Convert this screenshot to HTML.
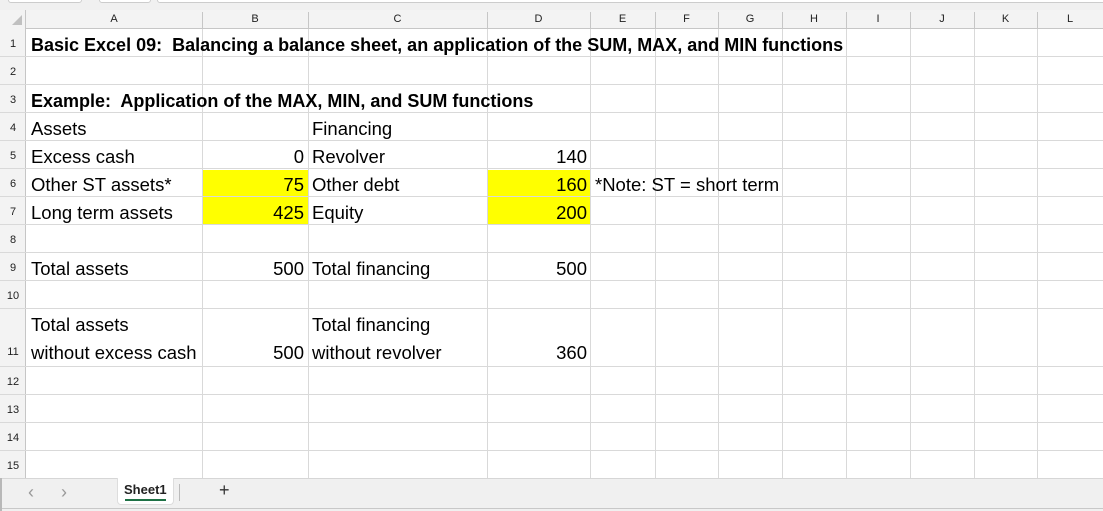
<!DOCTYPE html>
<html><head><style>
*{margin:0;padding:0;box-sizing:border-box}
body{width:1103px;height:511px;overflow:hidden;background:#fff;position:relative;font-family:"Liberation Sans",sans-serif}
.a{position:absolute}
.t{position:absolute;font-size:18.5px;color:#000;white-space:nowrap;line-height:20px}
.r{text-align:right}
.b{font-weight:bold;font-size:18px}
.vl{position:absolute;width:1px;background:#d9d9d9}
.hl{position:absolute;height:1px;background:#d9d9d9}
.ch{position:absolute;top:10px;height:19px;font-size:11px;color:#222;text-align:center;line-height:19px}
.rh{position:absolute;left:0;width:26px;font-size:11px;color:#222;text-align:center}
</style></head><body>
<div class="a" style="left:0;top:0;width:1103px;height:10px;background:#f0f0f0"></div>
<div class="a" style="left:8px;top:-4px;width:74px;height:7px;background:#fff;border:1px solid #ccc;border-radius:3px"></div>
<div class="a" style="left:99px;top:-4px;width:52px;height:7px;background:#fff;border:1px solid #ccc;border-radius:3px"></div>
<div class="a" style="left:157px;top:-4px;width:960px;height:7px;background:#fff;border:1px solid #ccc;border-radius:3px"></div>
<div class="a" style="left:0;top:10px;width:1103px;height:19px;background:#f3f3f3;border-bottom:1px solid #c6c6c6"></div>
<div class="a" style="left:0;top:10px;width:26px;height:468px;background:#f3f3f3;border-right:1px solid #c6c6c6"></div>
<div class="a" style="left:12px;top:15px;width:0;height:0;border-left:10px solid transparent;border-bottom:10px solid #c0c0c0"></div>
<div class="a" style="left:203px;top:170px;width:105px;height:55px;background:#ffff00"></div>
<div class="a" style="left:488px;top:170px;width:102px;height:55px;background:#ffff00"></div>
<div class="vl" style="left:202px;top:29px;height:449px"></div>
<div class="vl" style="left:308px;top:29px;height:449px"></div>
<div class="vl" style="left:487px;top:29px;height:449px"></div>
<div class="vl" style="left:590px;top:29px;height:449px"></div>
<div class="vl" style="left:655px;top:29px;height:449px"></div>
<div class="vl" style="left:718px;top:29px;height:449px"></div>
<div class="vl" style="left:782px;top:29px;height:449px"></div>
<div class="vl" style="left:846px;top:29px;height:449px"></div>
<div class="vl" style="left:910px;top:29px;height:449px"></div>
<div class="vl" style="left:974px;top:29px;height:449px"></div>
<div class="vl" style="left:1037px;top:29px;height:449px"></div>
<div class="vl" style="left:202px;top:12px;height:17px;background:#c6c6c6"></div>
<div class="vl" style="left:308px;top:12px;height:17px;background:#c6c6c6"></div>
<div class="vl" style="left:487px;top:12px;height:17px;background:#c6c6c6"></div>
<div class="vl" style="left:590px;top:12px;height:17px;background:#c6c6c6"></div>
<div class="vl" style="left:655px;top:12px;height:17px;background:#c6c6c6"></div>
<div class="vl" style="left:718px;top:12px;height:17px;background:#c6c6c6"></div>
<div class="vl" style="left:782px;top:12px;height:17px;background:#c6c6c6"></div>
<div class="vl" style="left:846px;top:12px;height:17px;background:#c6c6c6"></div>
<div class="vl" style="left:910px;top:12px;height:17px;background:#c6c6c6"></div>
<div class="vl" style="left:974px;top:12px;height:17px;background:#c6c6c6"></div>
<div class="vl" style="left:1037px;top:12px;height:17px;background:#c6c6c6"></div>
<div class="hl" style="left:0;top:56px;width:1103px"></div>
<div class="hl" style="left:0;top:84px;width:1103px"></div>
<div class="hl" style="left:0;top:112px;width:1103px"></div>
<div class="hl" style="left:0;top:140px;width:1103px"></div>
<div class="hl" style="left:0;top:168px;width:1103px"></div>
<div class="hl" style="left:0;top:196px;width:1103px"></div>
<div class="hl" style="left:0;top:224px;width:1103px"></div>
<div class="hl" style="left:0;top:252px;width:1103px"></div>
<div class="hl" style="left:0;top:280px;width:1103px"></div>
<div class="hl" style="left:0;top:308px;width:1103px"></div>
<div class="hl" style="left:0;top:366px;width:1103px"></div>
<div class="hl" style="left:0;top:394px;width:1103px"></div>
<div class="hl" style="left:0;top:422px;width:1103px"></div>
<div class="hl" style="left:0;top:450px;width:1103px"></div>
<div class="ch" style="left:26px;width:176px">A</div>
<div class="ch" style="left:202px;width:106px">B</div>
<div class="ch" style="left:308px;width:179px">C</div>
<div class="ch" style="left:487px;width:103px">D</div>
<div class="ch" style="left:590px;width:65px">E</div>
<div class="ch" style="left:655px;width:63px">F</div>
<div class="ch" style="left:718px;width:64px">G</div>
<div class="ch" style="left:782px;width:64px">H</div>
<div class="ch" style="left:846px;width:64px">I</div>
<div class="ch" style="left:910px;width:64px">J</div>
<div class="ch" style="left:974px;width:63px">K</div>
<div class="ch" style="left:1037px;width:66px">L</div>
<div class="rh" style="top:38px">1</div>
<div class="rh" style="top:66px">2</div>
<div class="rh" style="top:94px">3</div>
<div class="rh" style="top:122px">4</div>
<div class="rh" style="top:150px">5</div>
<div class="rh" style="top:178px">6</div>
<div class="rh" style="top:206px">7</div>
<div class="rh" style="top:234px">8</div>
<div class="rh" style="top:262px">9</div>
<div class="rh" style="top:290px">10</div>
<div class="rh" style="top:346px">11</div>
<div class="rh" style="top:376px">12</div>
<div class="rh" style="top:404px">13</div>
<div class="rh" style="top:432px">14</div>
<div class="rh" style="top:460px">15</div>
<div class="t b" style="left:31px;top:35px">Basic Excel 09:&nbsp; Balancing a balance sheet, an application of the SUM, MAX, and MIN functions</div>
<div class="t b" style="left:31px;top:91px">Example:&nbsp; Application of the MAX, MIN, and SUM functions</div>
<div class="t" style="left:31px;top:119px">Assets</div>
<div class="t" style="left:312px;top:119px">Financing</div>
<div class="t" style="left:31px;top:147px">Excess cash</div>
<div class="t r" style="right:799px;top:147px">0</div>
<div class="t" style="left:312px;top:147px">Revolver</div>
<div class="t r" style="right:516px;top:147px">140</div>
<div class="t" style="left:31px;top:175px">Other ST assets*</div>
<div class="t r" style="right:799px;top:175px">75</div>
<div class="t" style="left:312px;top:175px">Other debt</div>
<div class="t r" style="right:516px;top:175px">160</div>
<div class="t" style="left:595px;top:175px">*Note: ST = short term</div>
<div class="t" style="left:31px;top:203px">Long term assets</div>
<div class="t r" style="right:799px;top:203px">425</div>
<div class="t" style="left:312px;top:203px">Equity</div>
<div class="t r" style="right:516px;top:203px">200</div>
<div class="t" style="left:31px;top:259px">Total assets</div>
<div class="t r" style="right:799px;top:259px">500</div>
<div class="t" style="left:312px;top:259px">Total financing</div>
<div class="t r" style="right:516px;top:259px">500</div>
<div class="t" style="left:31px;top:315px">Total assets</div>
<div class="t" style="left:312px;top:315px">Total financing</div>
<div class="t" style="left:31px;top:343px">without excess cash</div>
<div class="t r" style="right:799px;top:343px">500</div>
<div class="t" style="left:312px;top:343px">without revolver</div>
<div class="t r" style="right:516px;top:343px">360</div>
<div class="a" style="left:0;top:478px;width:1103px;height:33px;background:#f0f0f0;border-top:1px solid #d6d6d6"></div>
<div class="a" style="left:0;top:508px;width:1103px;height:1px;background:#c8c8c8"></div>
<div class="a" style="left:0;top:478px;width:2px;height:33px;background:#b8b8b8"></div>
<div class="a" style="left:28px;top:482px;font-size:18px;color:#999">&#8249;</div>
<div class="a" style="left:61px;top:482px;font-size:18px;color:#999">&#8250;</div>
<div class="a" style="left:117px;top:478px;width:57px;height:27px;background:#fff;border-radius:0 0 4px 4px;border:1px solid #ddd;border-top:none"></div>
<div class="a" style="left:124px;top:482px;font-size:13px;font-weight:bold;color:#222">Sheet1</div>
<div class="a" style="left:125px;top:499px;width:41px;height:2px;background:#1e7145"></div>
<div class="a" style="left:179px;top:484px;width:1px;height:17px;background:#bbb"></div>
<div class="a" style="left:219px;top:480px;font-size:18px;color:#333">+</div>
</body></html>
